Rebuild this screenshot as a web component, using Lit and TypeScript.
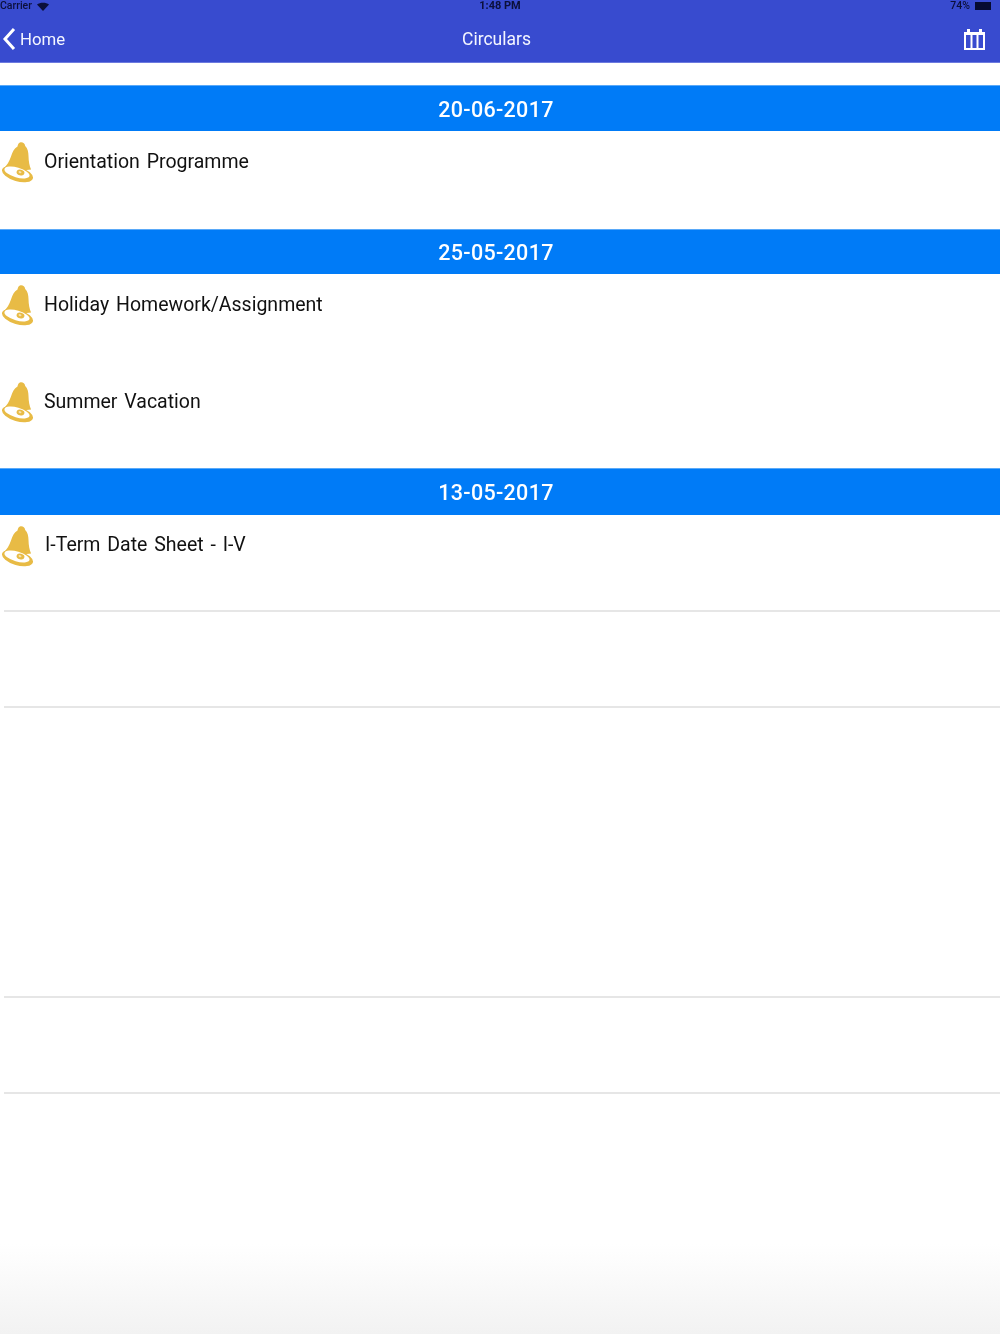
import { LitElement, html, css, svg } from "lit";
import { customElement } from "lit/decorators.js";

const bell = svg`<svg class="bell" viewBox="0 0 34 42" width="34" height="42" aria-hidden="true">
  <path fill="#e8bb45" d="M20 1.500c2.800-.6 4.700 1 5.200 3.400 2.600 2.400 3.200 6 3.300 10.100.1 5.500 1 10 2.600 13.500L9 31 3.500 27.500C7 24.500 9.300 20.500 11 15.500 12.500 11 14 7.500 17.500 5.500c.3-1.800 1-3.500 2.500-4Z"/>
  <ellipse cx="17.500" cy="33" rx="16" ry="7.300" fill="#e8bb45" transform="rotate(16 17.500 33)"/>
  <ellipse cx="17" cy="31.500" rx="13" ry="5" fill="#fff" transform="rotate(16 17 31.500)"/>
  <ellipse cx="20.500" cy="31.500" rx="4" ry="2.800" fill="#e8bb45" transform="rotate(16 20.500 31.500)"/>
  <ellipse cx="20" cy="31.200" rx="1.500" ry="1" fill="#f6e3b0" transform="rotate(16 20 31.200)"/>
</svg>`;

const sections = [
  { date: "20-06-2017", items: ["Orientation Programme"] },
  { date: "25-05-2017", items: ["Holiday Homework/Assignment", "Summer Vacation"] },
  { date: "13-05-2017", items: ["I-Term Date Sheet - I-V"] },
];

@customElement("app-root")
export class AppRoot extends LitElement {
  static styles = css`
    :host { display: block; position: relative; height: 1334px; overflow: hidden; background: #fff;
      font-family: Roboto, "Liberation Sans", sans-serif; }
    .nav { background: #384bcf; height: 63px; color: #f4f6ff; box-sizing: border-box; display: flex; flex-direction: column; border-bottom: 1px solid #6c7adf; }
    .status { height: 12px; display: grid; grid-template-columns: 1fr auto 1fr; align-items: center; font-size: 10.500px; font-weight: 500; color: #0b0f3a; line-height: 12px; filter: blur(.5px); }
    .status .left { display: flex; gap: 5px; align-items: center; }
    .status .mid { font-weight: 700; font-size: 11px; }
    .status .right { display: flex; gap: 5px; justify-content: flex-end; align-items: center; padding-right: 9px; }
    .batt { width: 16px; height: 8px; background: #060a30; }
    .bar { flex: 1; display: grid; grid-template-columns: 1fr auto 1fr; align-items: center; padding-top: 4px; }
    .back { display: flex; align-items: center; gap: 4px; padding-left: 2px; font-size: 16.800px; filter: blur(.4px); }
    .title { font-size: 17.500px; margin-left: -7px; filter: blur(.4px); }
    .cal { justify-self: end; margin-right: 15px; display: block; filter: blur(.3px); }
    .spacer { height: 22px; }
    .head { background: #007bf7; color: #fff; height: 46px; display: flex; align-items: center; justify-content: center; font-size: 21.500px; font-weight: 500; letter-spacing: .3px; padding: 2px 8px 0 0; border-top: 1px solid #5aa9f8; box-sizing: border-box; }
    .head span { filter: blur(.4px); }
    .head.h2 { height: 45px; padding-top: 0; }
    .head.h3 { height: 47px; padding-top: 0; }
    .row { height: 96.500px; box-sizing: border-box; display: flex; align-items: flex-start; padding-top: 10px; gap: 10px; }
    .row.first { height: 98px; }
    .row.third { height: 97.500px; }
    .row.sep { border-bottom: 2px solid #e6e6e6; margin-left: 4px; }
    .row .bell { filter: blur(.4px); flex: none; }
    .row.sep .bell { margin-left: -4px; }
    .text { font-size: 19.500px; word-spacing: 2px; color: #111; line-height: 42px; margin-top: 0; filter: blur(.5px); }
    .row.sep .text { margin-top: -1px; margin-left: 1px; }
    .blank { height: 96.500px; box-sizing: border-box; margin-left: 4px; }
    .blank.line { border-bottom: 2px solid #e6e6e6; }
    .fade { position: absolute; left: 0; right: 0; bottom: 0; height: 90px; background: linear-gradient(#fff0, #f2f2f2); pointer-events: none; }
  `;

  render() {
    return html`
      <div class="nav">
        <div class="status">
          <div class="left"><span>Carrier</span>
            <svg width="12" height="9" viewBox="0 0 12 9"><path d="M0 2.500C3 0 9 0 12 2.500L6 9Z" fill="#0b0f3a"/></svg>
          </div>
          <div class="mid">1:48 PM</div>
          <div class="right"><span>74%</span><div class="batt"></div></div>
        </div>
        <div class="bar">
          <div class="back">
            <svg width="14" height="24" viewBox="0 0 14 24"><path d="M12 2 3 12l9 10" fill="none" stroke="#fff" stroke-width="3"/></svg>
            <span>Home</span>
          </div>
          <div class="title">Circulars</div>
          <svg class="cal" width="21" height="22" viewBox="0 0 21 22">
            <path fill="none" stroke="#fff" stroke-width="2" d="M1 5h19v16H1zM7.500 5v16M13.500 5v16"/>
            <path fill="#fff" d="M0 4h21v3H0zM3 1h3v5H3zM15 1h3v5h-3z"/>
          </svg>
        </div>
      </div>
      <div class="spacer"></div>
      ${sections.map((s, i) => html`
        <div class="head ${i === 1 ? "h2" : i === 2 ? "h3" : ""}"><span>${s.date}</span></div>
        ${s.items.map((t) => html`
          <div class="row ${i === 2 ? "sep" : ""} ${i === 0 ? "first" : ""} ${t === "Summer Vacation" ? "third" : ""}">${bell}<div class="text">${t}</div></div>
        `)}
      `)}
      <div class="blank line"></div>
      <div class="blank"></div>
      <div class="blank"></div>
      <div class="blank line"></div>
      <div class="blank line"></div>
      <div class="fade"></div>
    `;
  }
}
